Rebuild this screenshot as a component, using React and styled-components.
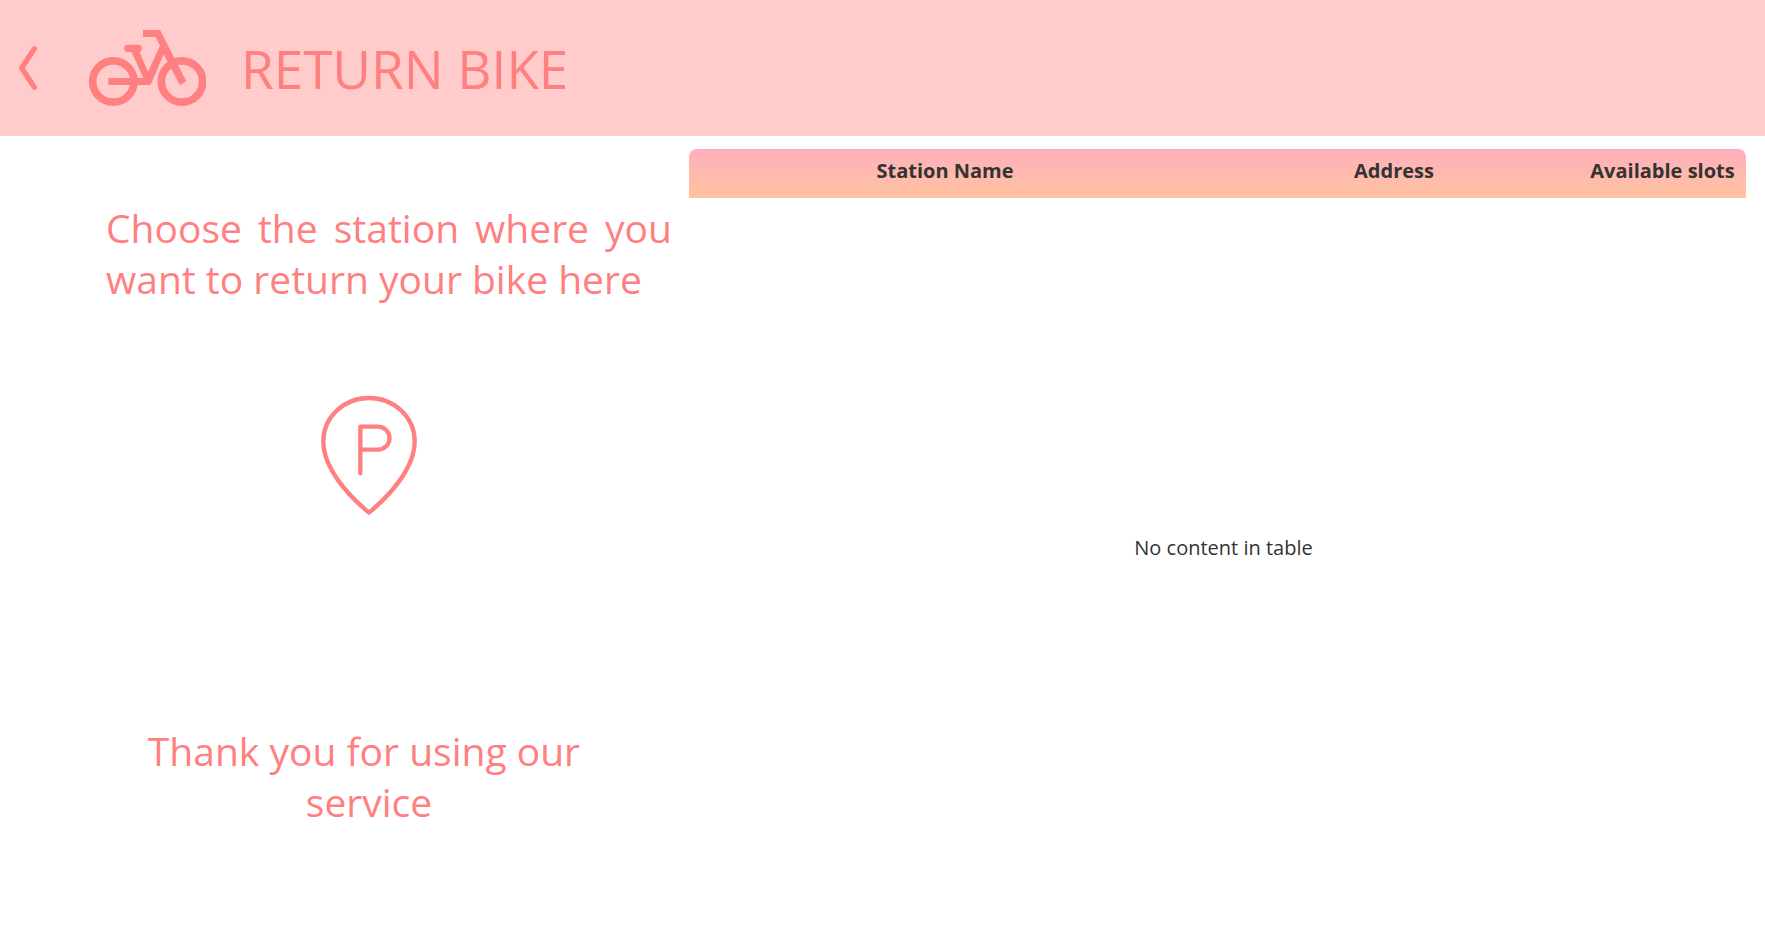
import React from "react";
import styled, { createGlobalStyle } from "styled-components";

const coral = "#ff8080";

const GlobalStyle = createGlobalStyle`
  * { box-sizing: border-box; }
  body {
    margin: 0;
    background: #fff;
    color: #333;
    font-family: "Open Sans", "Noto Sans", sans-serif;
  }
`;

const Page = styled.div`
  display: flex;
  flex-direction: column;
  min-height: 100vh;
`;

const Header = styled.header`
  display: flex;
  align-items: center;
  height: 136px;
  background: #ffcbcb;
  color: ${coral};
`;

const BackButton = styled.button`
  display: flex;
  align-items: center;
  height: 64px;
  padding: 0 19px;
  margin-right: 33px;
  border: 0;
  background: none;
  color: inherit;
  cursor: pointer;
`;

const Title = styled.h1`
  margin: 0 0 0 35px;
  padding-top: 2px;
  font-size: 53px;
  line-height: 72px;
  font-weight: 400;
`;

const Main = styled.main`
  flex: 1;
  display: grid;
  grid-template-columns: 689fr 1076fr;
`;

const Guide = styled.section`
  display: flex;
  flex-direction: column;
  align-items: center;
  padding: 66px 0 0 49px;
  color: ${coral};
`;

const Message = styled.p`
  width: ${(p) => p.$width};
  margin: 0;
  font-size: 39px;
  line-height: 51px;
  text-align: ${(p) => p.$align};
  white-space: ${(p) => (p.$align === "center" ? "break-spaces" : "normal")};
`;

const Instruction = styled(Message)`
  align-self: flex-end;
  margin-right: 17px;
`;

const PinBox = styled.div`
  display: flex;
  margin: 91px 0 210px;
`;

const Stations = styled.section`
  display: flex;
  flex-direction: column;
  padding: 13px 19px 13px 0;
`;

const Table = styled.table`
  flex: 1;
  display: flex;
  flex-direction: column;
  font-size: 20px;
  line-height: 28px;
`;

const TableHead = styled.thead`
  display: block;
  border-radius: 8px 8px 0 0;
  background: linear-gradient(#ffafbd, #ffc3a0);
`;

const HeadRow = styled.tr`
  display: grid;
  grid-template-columns: 512fr 386fr 159fr;
  height: 49px;
`;

const HeadCell = styled.th`
  padding: ${(p) => (p.$last ? "8px 8px 0 0" : "8px 0 0")};
  font-weight: 700;
  text-align: center;
  white-space: nowrap;
`;

const TableBody = styled.tbody`
  flex: 1;
  display: flex;
`;

const EmptyRow = styled.tr`
  flex: 1;
  display: flex;
`;

const EmptyCell = styled.td`
  flex: 1;
  display: flex;
  align-items: center;
  justify-content: center;
  padding: 0 0 20px 12px;
`;

const ChevronIcon = () => (
  <svg width="18" height="44" viewBox="57 136 54 132" fill="none" aria-hidden="true">
    <path d="M103 144.500L65 202L103 259.500" stroke="currentColor" strokeWidth="16" strokeLinecap="round" strokeLinejoin="round" />
  </svg>
);

const BikeIcon = () => (
  <svg width="117" height="76" viewBox="267 90 351 228" fill="currentColor" aria-hidden="true">
    <g fill="none" stroke="currentColor" strokeWidth="23">
      <circle cx="340" cy="244.500" r="62" />
      <circle cx="546" cy="244.500" r="62" />
    </g>
    <rect x="373" y="134" width="52" height="22" rx="10" />
    <path d="M325 234H430L392 150L416 150L444 215L480 137L467 111H429V90H480L559 244L540 256L491 163L452 255H325Z" />
  </svg>
);

const ParkingPinIcon = () => (
  <svg width="96" height="120" viewBox="0 0 288 360" fill="none" stroke="currentColor" strokeWidth="13" strokeLinecap="round" strokeLinejoin="round" aria-hidden="true">
    <path d="M144 9C69 9 7 66 7 139C7 219 80 300 144 353C208 300 281 219 281 139C281 66 219 9 144 9Z" />
    <path d="M118 235V95H171A34.500 34.500 0 0 1 171 164H118" />
  </svg>
);

export default function App() {
  return (
    <>
      <GlobalStyle />
      <Page>
        <Header>
          <BackButton type="button" aria-label="Back">
            <ChevronIcon />
          </BackButton>
          <BikeIcon />
          <Title>RETURN BIKE</Title>
        </Header>
        <Main>
          <Guide>
            <Instruction $width="566px" $align="justify">
              Choose the station where you want to return your bike here
            </Instruction>
            <PinBox>
              <ParkingPinIcon />
            </PinBox>
            <Message $width="480px" $align="center">
              Thank you for using our service
            </Message>
          </Guide>
          <Stations>
            <Table>
              <TableHead>
                <HeadRow>
                  <HeadCell scope="col">Station Name</HeadCell>
                  <HeadCell scope="col">Address</HeadCell>
                  <HeadCell scope="col" $last>Available slots</HeadCell>
                </HeadRow>
              </TableHead>
              <TableBody>
                <EmptyRow>
                  <EmptyCell colSpan={3}>No content in table</EmptyCell>
                </EmptyRow>
              </TableBody>
            </Table>
          </Stations>
        </Main>
      </Page>
    </>
  );
}
